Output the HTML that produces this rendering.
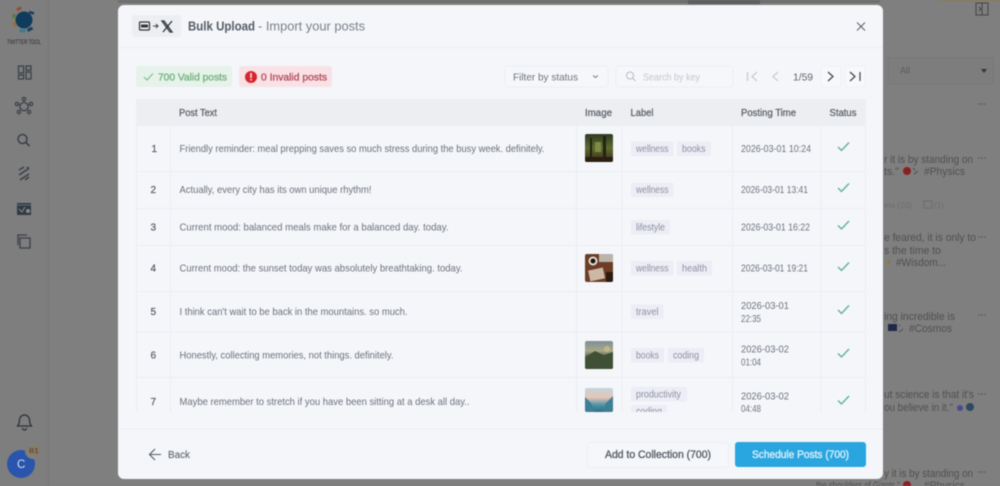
<!DOCTYPE html>
<html><head><meta charset="utf-8"><title>Bulk Upload</title>
<style>
html,body{margin:0;padding:0;background:#7f7f7f;width:1000px;height:486px;overflow:hidden}
svg{display:block;filter:blur(.4px)}
text{font-family:"Liberation Sans",sans-serif;font-size:10px;fill:#6e747c}
.h{fill:#5b6168;stroke:#5b6168;stroke-width:.25px;font-size:10px}
.n{fill:#5b6168;stroke:#5b6168;stroke-width:.25px;font-size:10px}
.p{fill:#6c727a;font-size:10.200px}
.t{fill:#8d90a0;font-size:9.800px}
.c{fill:#ecedf5}
.d{fill:#6e747c;font-size:10.200px}
.bg{fill:#505050;font-size:11px}
.ck{fill:none;stroke:#5cae94;stroke-width:1.300}
.ln{stroke:#eceef3;stroke-width:1}
.ic{fill:none;stroke:#3b4149;stroke-width:1.300}
.dots{fill:#555}
</style></head><body>
<svg width="1000" height="486" viewBox="0 0 1000 486" xmlns="http://www.w3.org/2000/svg">
<defs>
<clipPath id="tb"><rect x="130" y="99" width="745" height="313"/></clipPath>
<clipPath id="i1"><rect x="585" y="134" width="28" height="28" rx="2"/></clipPath>
<clipPath id="i4"><rect x="585" y="254" width="28" height="28" rx="2"/></clipPath>
<clipPath id="i6"><rect x="585" y="341" width="28" height="28" rx="2"/></clipPath>
<clipPath id="i7"><rect x="585" y="388" width="28" height="24" rx="2"/></clipPath>
<linearGradient id="g1" x1="0" y1="0" x2="0" y2="1"><stop offset="0" stop-color="#2f3a20"/><stop offset=".5" stop-color="#5d6b30"/><stop offset="1" stop-color="#3b2a1a"/></linearGradient>
<linearGradient id="g6" x1="0" y1="0" x2="0" y2="1"><stop offset="0" stop-color="#7d8f96"/><stop offset=".35" stop-color="#a9a888"/><stop offset=".6" stop-color="#4c5e48"/><stop offset="1" stop-color="#2c3a22"/></linearGradient>
<linearGradient id="g7" x1="0" y1="0" x2="0" y2="1"><stop offset="0" stop-color="#c5d5dc"/><stop offset=".4" stop-color="#e6c5b5"/><stop offset=".7" stop-color="#4f94a8"/><stop offset="1" stop-color="#2e6d80"/></linearGradient>
</defs>

<!-- backdrop -->
<rect width="1000" height="486" fill="#7f7f7f"/>
<rect x="0" y="0" width="48" height="486" fill="#7e7e7e"/>
<rect x="48" y="0" width="1" height="486" fill="#757575"/>
<rect x="118" y="0" width="762" height="3" fill="#6e6e6e"/>
<rect x="688" y="0" width="72" height="4" fill="#5e5e5e"/>
<rect x="940" y="0" width="60" height="1" fill="#8a7d50"/>

<!-- logo -->
<circle cx="24" cy="20" r="8.500" fill="#0f3c5c"/>
<path d="M17 10l4-2.500" stroke="#9a4a30" stroke-width="3" fill="none"/>
<path d="M14.500 14l-1 4" stroke="#5a7a3a" stroke-width="3" fill="none"/>
<path d="M14 22l1.500 4.500" stroke="#9a7030" stroke-width="3" fill="none"/>
<path d="M19.500 30.500l6 .5" stroke="#3a7a95" stroke-width="3" fill="none"/>
<path d="M27.500 30.500l5-2.500" stroke="#1d3e58" stroke-width="3" fill="none"/>
<path d="M29 12l5 1.500" stroke="#1d3e58" stroke-width="2.500" fill="none"/>
<text x="7" y="44" style="font-size:6.500px;fill:#2c2c2c" textLength="34" lengthAdjust="spacingAndGlyphs">TWITTER TOOL</text>

<!-- side icons -->
<g class="ic">
<rect x="18.500" y="66" width="5" height="7"/><rect x="26" y="66" width="5" height="4"/><rect x="18.500" y="75" width="5" height="4"/><rect x="26" y="72" width="5" height="7"/>
<path d="M24 102l4 2.500v4l-4 2.500l-4-2.500v-4z"/>
<circle cx="24" cy="99" r="1.600"/><circle cx="17" cy="104" r="1.600"/><circle cx="31" cy="104" r="1.600"/><circle cx="19" cy="112" r="1.600"/><circle cx="29" cy="112" r="1.600"/>
<circle cx="22.500" cy="139" r="4.500" stroke-width="1.500"/><path d="M26 142.500l3.500 3.500" stroke-width="1.800"/>
<path d="M19 170l5-3M19 175l9-6M20 180l9-6M25 180l4-3M27 167l2 2" stroke-width="1.600"/>
<path d="M27 235h-9v10M20 238h10v10h-10z"/>
<path d="M24.500 415a5 5 0 0 1 5 5c0 4 1.500 5 2 6h-14c.5-1 2-2 2-6a5 5 0 0 1 5-5zM22.500 428a2 2 0 0 0 4 0" stroke="#2e3238"/>
</g>
<rect x="17" y="203" width="14" height="12" fill="#2f3a45"/>
<path d="M19 209l3 3 3-5" stroke="#8a8a8a" stroke-width="1" fill="none"/>
<circle cx="28" cy="211" r="2" fill="#8a8a8a"/>
<path d="M17 205h14" stroke="#8a8a8a" stroke-width=".6"/>
<circle cx="21" cy="464" r="14" fill="#2a55ad"/>
<circle cx="33" cy="451" r="8" fill="#7f7f7f"/>
<rect x="27" y="446" width="13" height="9" rx="3" fill="#8a7c68"/>
<text x="17" y="468" style="font-size:11.500px;fill:#d5def0">C</text>
<text x="29" y="453" style="font-size:7px;fill:#4c3d22" textLength="10" lengthAdjust="spacingAndGlyphs">81</text>

<!-- right background content -->
<rect x="888" y="58" width="105" height="26" fill="#7d7d7d" stroke="#787878"/>
<text x="900" y="73.500" style="font-size:9px;fill:#5c5c5c">All</text>
<path d="M981 69h6l-3 4z" fill="#333"/>
<path d="M976 3h12v12h-12zM982 3v12M979 7l2 2-2 2" fill="none" stroke="#444" stroke-width="1"/>
<g class="dots">
<circle cx="979" cy="104" r=".8"/><circle cx="982" cy="104" r=".8"/><circle cx="985" cy="104" r=".8"/>
<circle cx="979" cy="158" r=".8"/><circle cx="982" cy="158" r=".8"/><circle cx="985" cy="158" r=".8"/>
<circle cx="979" cy="237" r=".8"/><circle cx="982" cy="237" r=".8"/><circle cx="985" cy="237" r=".8"/>
<circle cx="979" cy="315" r=".8"/><circle cx="982" cy="315" r=".8"/><circle cx="985" cy="315" r=".8"/>
<circle cx="979" cy="394" r=".8"/><circle cx="982" cy="394" r=".8"/><circle cx="985" cy="394" r=".8"/>
<circle cx="979" cy="472" r=".8"/><circle cx="982" cy="472" r=".8"/><circle cx="985" cy="472" r=".8"/>
</g>
<text class="bg" x="884" y="163" textLength="89" lengthAdjust="spacingAndGlyphs">r it is by standing on</text>
<text class="bg" x="884" y="175" textLength="15" lengthAdjust="spacingAndGlyphs">ts."</text>
<circle cx="907" cy="171" r="4" fill="#8a2020"/><path d="M913 168l2 2M914 174l4-3" stroke="#4a4a4a" fill="none"/>
<text class="bg" x="924" y="175" textLength="41" lengthAdjust="spacingAndGlyphs">#Physics</text>
<text x="884" y="208" style="font-size:8px;fill:#6d6d6d" textLength="28" lengthAdjust="spacingAndGlyphs">ets (10)</text>
<rect x="924" y="201" width="8" height="7" fill="none" stroke="#6d6d6d"/>
<text x="934" y="208" style="font-size:8px;fill:#6d6d6d">(1)</text>
<text class="bg" x="884" y="241" textLength="92" lengthAdjust="spacingAndGlyphs">e feared, it is only to</text>
<text class="bg" x="884" y="254" textLength="57" lengthAdjust="spacingAndGlyphs">s the time to</text>
<path d="M890 258l-4 5h3l-2 4 5-6h-3z" fill="#8a7a40"/>
<text class="bg" x="896" y="266" textLength="50" lengthAdjust="spacingAndGlyphs">#Wisdom...</text>
<text class="bg" x="884" y="320" textLength="71" lengthAdjust="spacingAndGlyphs">ing incredible is</text>
<rect x="888" y="324" width="9" height="7" fill="#1d2a48"/><path d="M899 325l1 1M899 332l4-3" stroke="#4a4a4a" fill="none"/>
<text class="bg" x="909" y="332" textLength="43" lengthAdjust="spacingAndGlyphs">#Cosmos</text>
<text class="bg" x="884" y="398" textLength="90" lengthAdjust="spacingAndGlyphs">ut science is that it's</text>
<text class="bg" x="884" y="411" textLength="69" lengthAdjust="spacingAndGlyphs">ou believe in it."</text>
<circle cx="970" cy="407" r="4" fill="#2d4a60"/>
<circle cx="960" cy="408" r="3" fill="#4a4a90"/>
<text class="bg" x="884" y="477" textLength="89" lengthAdjust="spacingAndGlyphs">y it is by standing on</text>
<text class="bg" x="816" y="489" textLength="84" lengthAdjust="spacingAndGlyphs">the shoulders of Giants."</text>
<circle cx="907" cy="485" r="4" fill="#8a2020"/>
<text class="bg" x="924" y="489" textLength="41" lengthAdjust="spacingAndGlyphs">#Physics</text>

<!-- modal -->
<rect x="118" y="5" width="765" height="474" rx="6" fill="#f4f6fa"/>
<line x1="118" x2="883" y1="47.500" y2="47.500" stroke="#eef0f4"/>
<line x1="118" x2="883" y1="429" y2="429" stroke="#eceef3"/>

<!-- header -->
<rect x="132" y="15" width="49" height="22" rx="3" fill="#eceef1"/>
<rect x="139.500" y="22" width="10" height="8" rx="1" fill="none" stroke="#30353b" stroke-width="1.200"/>
<rect x="141" y="24.500" width="7" height="3" fill="#30353b"/>
<path d="M153 26h5M156 24l2 2-2 2" fill="none" stroke="#444" stroke-width="1"/>
<path d="M164 21l8 11h-2l-8-11zM172 21l-9 11" fill="none" stroke="#30353b" stroke-width="1.300"/>
<text x="188" y="30.500" style="font-size:13px;font-weight:bold;fill:#545c66" textLength="67" lengthAdjust="spacingAndGlyphs">Bulk Upload</text>
<text x="258" y="30.500" style="font-size:13px;fill:#7b8189" textLength="107" lengthAdjust="spacingAndGlyphs">- Import your posts</text>
<path d="M857 22.500l8 8M865 22.500l-8 8" stroke="#5a6066" stroke-width="1" fill="none"/>

<!-- pills -->
<rect x="136" y="66" width="96" height="21" rx="3" fill="#e7f2ea"/>
<path d="M144 77l3 3 6-6.500" fill="none" stroke="#7fc08c" stroke-width="1.200"/>
<text x="158" y="80.500" style="font-size:10.500px;fill:#6fb27c;stroke:#6fb27c;stroke-width:.3px" textLength="69" lengthAdjust="spacingAndGlyphs">700 Valid posts</text>
<rect x="239" y="66" width="93" height="21" rx="3" fill="#f8e2e5"/>
<circle cx="251" cy="77" r="6" fill="#d6262c"/>
<rect x="250.200" y="73" width="1.600" height="5" fill="#f8e2e5"/><rect x="250.200" y="79" width="1.600" height="1.500" fill="#f8e2e5"/>
<text x="261" y="80.500" style="font-size:10.500px;fill:#b44a58;stroke:#b44a58;stroke-width:.3px" textLength="66" lengthAdjust="spacingAndGlyphs">0 Invalid posts</text>

<!-- filters -->
<rect x="505" y="66" width="103" height="21" rx="3" fill="#f5f7fa" stroke="#eceef3"/>
<text x="513" y="80.500" style="font-size:10.500px;fill:#6f757d" textLength="65" lengthAdjust="spacingAndGlyphs">Filter by status</text>
<path d="M593 75.500l2.500 2 2.500-2" fill="none" stroke="#777" stroke-width="1"/>
<rect x="616" y="66" width="117" height="21" rx="3" fill="#f5f7fa" stroke="#eceef3"/>
<circle cx="630" cy="75.500" r="3.500" fill="none" stroke="#b8bcc3"/><path d="M632.500 78l3 3" stroke="#b8bcc3"/>
<text x="643" y="80.500" style="font-size:10px;fill:#c3c7cd" textLength="57" lengthAdjust="spacingAndGlyphs">Search by key</text>
<path d="M747.500 72v9M757 72l-5 4.500 5 4.500" fill="none" stroke="#c0c4ca" stroke-width="1.100"/>
<path d="M778 72l-5 4.500 5 4.500" fill="none" stroke="#c0c4ca" stroke-width="1.100"/>
<text x="793" y="80.500" style="font-size:10.500px;fill:#5f656d" textLength="20" lengthAdjust="spacingAndGlyphs">1/59</text>
<rect x="821" y="66" width="20" height="21" rx="3" fill="#f6f8fb" stroke="#eef0f4"/>
<path d="M828 72l5 4.500-5 4.500" fill="none" stroke="#3f444b" stroke-width="1.200"/>
<rect x="845" y="66" width="20" height="21" rx="3" fill="#f6f8fb" stroke="#eef0f4"/>
<path d="M850 72l5 4.500-5 4.500M860 72v9" fill="none" stroke="#3f444b" stroke-width="1.200"/>

<!-- table -->
<g clip-path="url(#tb)">
<rect x="136" y="99" width="730" height="27" fill="#eceef1"/>
<g class="ln">
<line x1="136" x2="866" y1="171.500" y2="171.500"/><line x1="136" x2="866" y1="208.500" y2="208.500"/>
<line x1="136" x2="866" y1="245.500" y2="245.500"/><line x1="136" x2="866" y1="291.500" y2="291.500"/>
<line x1="136" x2="866" y1="332" y2="332"/><line x1="136" x2="866" y1="377.500" y2="377.500"/>
<line x1="136.500" x2="136.500" y1="99" y2="412"/><line x1="170.500" x2="170.500" y1="99" y2="412"/>
<line x1="576.500" x2="576.500" y1="99" y2="412"/><line x1="622" x2="622" y1="99" y2="412"/>
<line x1="732.500" x2="732.500" y1="99" y2="412"/><line x1="821" x2="821" y1="99" y2="412"/><line x1="865.500" x2="865.500" y1="99" y2="412"/>
</g>
<text class="h" x="179" y="116" textLength="38" lengthAdjust="spacingAndGlyphs">Post Text</text>
<text class="h" x="585" y="116" textLength="27" lengthAdjust="spacingAndGlyphs">Image</text>
<text class="h" x="630.500" y="116" textLength="23" lengthAdjust="spacingAndGlyphs">Label</text>
<text class="h" x="741" y="116" textLength="55" lengthAdjust="spacingAndGlyphs">Posting Time</text>
<text class="h" x="829.500" y="116" textLength="27" lengthAdjust="spacingAndGlyphs">Status</text>

<text class="n" x="151.500" y="152">1</text>
<text class="n" x="150.500" y="193">2</text>
<text class="n" x="150.500" y="230.500">3</text>
<text class="n" x="150.500" y="271.500">4</text>
<text class="n" x="150.500" y="315">5</text>
<text class="n" x="150.500" y="358.500">6</text>
<text class="n" x="150.500" y="405">7</text>

<text class="p" x="179.500" y="152" textLength="365" lengthAdjust="spacingAndGlyphs">Friendly reminder: meal prepping saves so much stress during the busy week. definitely.</text>
<text class="p" x="179.500" y="193" textLength="192" lengthAdjust="spacingAndGlyphs">Actually, every city has its own unique rhythm!</text>
<text class="p" x="179.500" y="230.500" textLength="269" lengthAdjust="spacingAndGlyphs">Current mood: balanced meals make for a balanced day. today.</text>
<text class="p" x="179.500" y="271.500" textLength="283" lengthAdjust="spacingAndGlyphs">Current mood: the sunset today was absolutely breathtaking. today.</text>
<text class="p" x="179.500" y="315" textLength="228" lengthAdjust="spacingAndGlyphs">I think can't wait to be back in the mountains. so much.</text>
<text class="p" x="179.500" y="358.500" textLength="214" lengthAdjust="spacingAndGlyphs">Honestly, collecting memories, not things. definitely.</text>
<text class="p" x="179.500" y="405" textLength="290" lengthAdjust="spacingAndGlyphs">Maybe remember to stretch if you have been sitting at a desk all day..</text>

<!-- images -->
<g clip-path="url(#i1)"><rect x="585" y="134" width="28" height="28" fill="url(#g1)"/><rect x="590" y="138" width="2" height="22" fill="#23220f"/><rect x="603" y="136" width="3" height="24" fill="#1f2510"/><rect x="595" y="142" width="6" height="10" fill="#7f8a45"/><rect x="585" y="157" width="28" height="5" fill="#2b1d10"/></g>
<g clip-path="url(#i4)"><rect x="585" y="254" width="28" height="28" fill="#6d3d25"/><rect x="599" y="254" width="14" height="8" fill="#b9b5aa"/><circle cx="593" cy="261" r="4.500" fill="#e3ddd3"/><circle cx="593" cy="261" r="2.500" fill="#1a1410"/><rect x="589" y="269" width="15" height="11" fill="#cdb8a6" transform="rotate(-12 596 274)"/><rect x="606" y="272" width="7" height="10" fill="#2c1a10"/></g>
<g clip-path="url(#i6)"><rect x="585" y="341" width="28" height="28" fill="url(#g6)"/><circle cx="607" cy="349" r="3" fill="#c2b78a"/><path d="M585 357l10-6 9 4 9-3v17h-28z" fill="#3f5036"/></g>
<g clip-path="url(#i7)"><rect x="585" y="388" width="28" height="24" fill="url(#g7)"/><path d="M585 397l6 6 4 9h-10zM613 396l-7 7-3 9h10z" fill="#3d7f95"/></g>

<!-- chips -->
<rect class="c" x="631" y="141.500" width="42.500" height="14.500" rx="2"/><text class="t" x="636" y="152" textLength="32.500" lengthAdjust="spacingAndGlyphs">wellness</text>
<rect class="c" x="677" y="141.500" width="34" height="14.500" rx="2"/><text class="t" x="682" y="152" textLength="23.500" lengthAdjust="spacingAndGlyphs">books</text>
<rect class="c" x="631" y="182.500" width="42.500" height="14.500" rx="2"/><text class="t" x="636" y="193" textLength="32.500" lengthAdjust="spacingAndGlyphs">wellness</text>
<rect class="c" x="631" y="220" width="39" height="14.500" rx="2"/><text class="t" x="636" y="230.500" textLength="29" lengthAdjust="spacingAndGlyphs">lifestyle</text>
<rect class="c" x="631" y="261" width="42.500" height="14.500" rx="2"/><text class="t" x="636" y="271.500" textLength="32.500" lengthAdjust="spacingAndGlyphs">wellness</text>
<rect class="c" x="677" y="261" width="35" height="14.500" rx="2"/><text class="t" x="682" y="271.500" textLength="25" lengthAdjust="spacingAndGlyphs">health</text>
<rect class="c" x="631" y="304.500" width="32.500" height="14.500" rx="2"/><text class="t" x="636" y="315" textLength="22.500" lengthAdjust="spacingAndGlyphs">travel</text>
<rect class="c" x="631" y="348" width="33" height="14.500" rx="2"/><text class="t" x="636" y="358.500" textLength="23" lengthAdjust="spacingAndGlyphs">books</text>
<rect class="c" x="668" y="348" width="36" height="14.500" rx="2"/><text class="t" x="673" y="358.500" textLength="26" lengthAdjust="spacingAndGlyphs">coding</text>
<rect class="c" x="631" y="387" width="56" height="14.500" rx="2"/><text class="t" x="636" y="397.500" textLength="45" lengthAdjust="spacingAndGlyphs">productivity</text>
<rect class="c" x="631" y="405" width="36" height="14.500" rx="2"/><text class="t" x="636" y="414.500" textLength="26" lengthAdjust="spacingAndGlyphs">coding</text>

<!-- time -->
<text class="d" x="741" y="152" textLength="70" lengthAdjust="spacingAndGlyphs">2026-03-01 10:24</text>
<text class="d" x="741" y="193" textLength="67" lengthAdjust="spacingAndGlyphs">2026-03-01 13:41</text>
<text class="d" x="741" y="230.500" textLength="69" lengthAdjust="spacingAndGlyphs">2026-03-01 16:22</text>
<text class="d" x="741" y="271.500" textLength="67" lengthAdjust="spacingAndGlyphs">2026-03-01 19:21</text>
<text class="d" x="741" y="309" textLength="48" lengthAdjust="spacingAndGlyphs">2026-03-01</text><text class="d" x="741" y="322" textLength="20" lengthAdjust="spacingAndGlyphs">22:35</text>
<text class="d" x="741" y="352.500" textLength="48" lengthAdjust="spacingAndGlyphs">2026-03-02</text><text class="d" x="741" y="365.500" textLength="20" lengthAdjust="spacingAndGlyphs">01:04</text>
<text class="d" x="741" y="399.500" textLength="48" lengthAdjust="spacingAndGlyphs">2026-03-02</text><text class="d" x="741" y="412" textLength="20" lengthAdjust="spacingAndGlyphs">04:48</text>

<!-- checks -->
<path class="ck" d="M838 147l3.500 3.500 7.500-8"/>
<path class="ck" d="M838 188l3.500 3.500 7.500-8"/>
<path class="ck" d="M838 225.500l3.500 3.500 7.500-8"/>
<path class="ck" d="M838 267l3.500 3.500 7.500-8"/>
<path class="ck" d="M838 310l3.500 3.500 7.500-8"/>
<path class="ck" d="M838 353.500l3.500 3.500 7.500-8"/>
<path class="ck" d="M838 400.500l3.500 3.500 7.500-8"/>
</g>

<!-- footer -->
<path d="M161 454.500h-11M155 449l-5.500 5.500 5.500 5.500" fill="none" stroke="#555b63" stroke-width="1.100"/>
<text x="168" y="458" style="font-size:10.500px;fill:#656b73;stroke:#656b73;stroke-width:.15px" textLength="22" lengthAdjust="spacingAndGlyphs">Back</text>
<rect x="587.500" y="442.500" width="141" height="25" rx="3" fill="#f5f7fa" stroke="#eceef3"/>
<text x="605" y="458" style="font-size:11px;fill:#575d65;stroke:#575d65;stroke-width:.35px" textLength="106" lengthAdjust="spacingAndGlyphs">Add to Collection (700)</text>
<rect x="735" y="442" width="131" height="25" rx="3" fill="#29a6e0"/>
<text x="752" y="458" style="font-size:11px;fill:#dff1fb;stroke:#dff1fb;stroke-width:.35px" textLength="97" lengthAdjust="spacingAndGlyphs">Schedule Posts (700)</text>
</svg>
</body></html>
